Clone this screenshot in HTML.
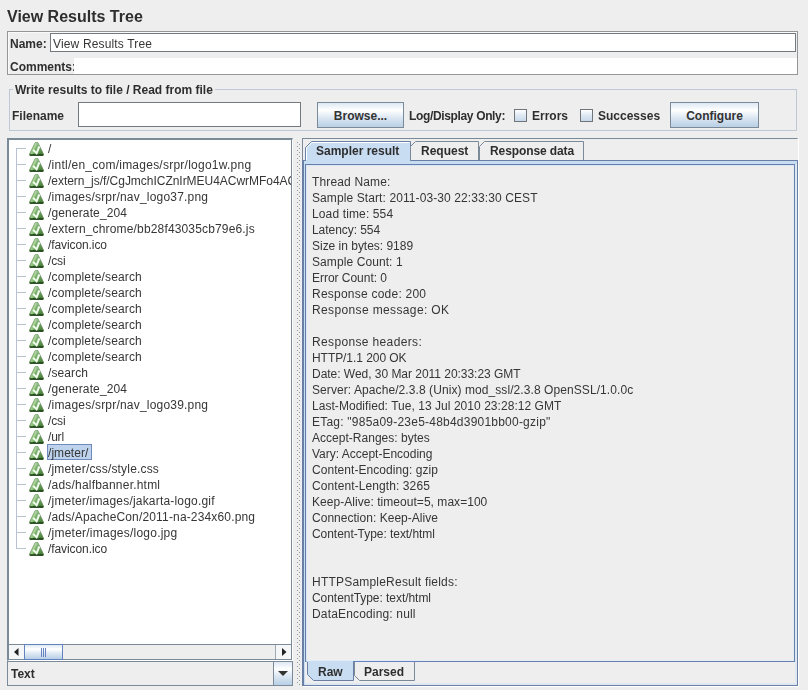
<!DOCTYPE html>
<html><head><meta charset="utf-8">
<style>
*{margin:0;padding:0;box-sizing:border-box}
html,body{width:808px;height:690px;overflow:hidden;background:#eeeeee;font-family:"Liberation Sans",sans-serif;color:#333;font-size:12px}
.a{position:absolute}
.t{position:absolute;white-space:pre;line-height:16px;height:16px;color:#363636;will-change:transform}
.t.b{color:#2e2e2e}
.b{font-weight:bold}
.btn{position:absolute;border:1px solid #7a8a99;background:linear-gradient(#dde8f3 0%,#ffffff 30%,#dde8f3 60%,#b8cfe5 100%);font-weight:bold;text-align:center;line-height:26px;color:#333}
.cb{position:absolute;width:13px;height:13px;border:1px solid #6f757a;background:linear-gradient(#ffffff,#dde8f3 50%,#c9d9ea)}
</style></head><body>
<svg width="0" height="0" style="position:absolute">
<defs>
<linearGradient id="gg" x1="0" y1="0" x2="1" y2="0.35">
<stop offset="0" stop-color="#9fd08a"/><stop offset="0.45" stop-color="#8cc476"/><stop offset="0.55" stop-color="#5f9c4e"/><stop offset="1" stop-color="#3f7a32"/>
</linearGradient>
<linearGradient id="gv" x1="0" y1="0" x2="0" y2="1">
<stop offset="0" stop-color="#ffffff" stop-opacity="0.35"/><stop offset="1" stop-color="#ffffff" stop-opacity="0"/>
</linearGradient>
<symbol id="ok" viewBox="0 0 15 14">
<path d="M6.2 0.6H8.8L14.5 12.2Q15 13.4 13.8 13.4H1.2Q0 13.4 0.5 12.2Z" fill="url(#gg)" stroke="#4d7d42" stroke-width="0.7"/>
<path d="M6.2 0.6H8.8L14.5 12.2Q15 13.4 13.8 13.4H1.2Q0 13.4 0.5 12.2Z" fill="url(#gv)"/>
<path d="M0.9 13H14.1" stroke="#1d3f18" stroke-width="1.5"/>
<path d="M4.1 7.9L7.6 11.3L10.3 4.3" fill="none" stroke="#f2fbee" stroke-width="2"/>
</symbol>
</defs></svg>
<!-- title -->
<div class="t b" style="left:7px;top:9px;font-size:16px;height:18px;line-height:16px">View Results Tree</div>

<!-- name panel -->
<div class="a" style="left:7px;top:31px;width:791px;height:44px;border:1px solid #949799;box-shadow:inset 1px 1px 0 #fafafa"></div>
<div class="t b" style="left:9.5px;top:36px">Name:</div>
<div class="a" style="left:50px;top:33px;width:746px;height:19px;border:1px solid #74797e;background:#fff"></div>
<div class="t" style="left:53px;top:36px;letter-spacing:0.15px">View Results Tree</div>
<div class="t b" style="left:9.5px;top:59px">Comments:</div>
<div class="a" style="left:74px;top:58px;width:723px;height:16px;background:#fff"></div>

<!-- group box -->
<div class="a" style="left:9px;top:89px;width:788px;height:42px;border:1px solid #bdc9d4"></div>
<div class="t b" style="left:13px;top:82px;padding:0 2px;background:#eeeeee">Write results to file / Read from file</div>
<div class="t b" style="left:12px;top:108px">Filename</div>
<div class="a" style="left:78px;top:102px;width:223px;height:25px;border:1px solid #74797e;background:#fff"></div>
<div class="btn" style="left:317px;top:102px;width:87px;height:26px">Browse...</div>
<div class="t b" style="left:409px;top:108px;letter-spacing:-0.35px">Log/Display Only:</div>
<div class="cb" style="left:514px;top:109px"></div>
<div class="t b" style="left:531.5px;top:108px">Errors</div>
<div class="cb" style="left:580px;top:109px"></div>
<div class="t b" style="left:598px;top:108px">Successes</div>
<div class="btn" style="left:670px;top:102px;width:89px;height:26px">Configure</div>

<!-- tree pane -->
<div class="a" style="left:7px;top:138px;width:286px;height:523px;border-top:2px solid #7a8a99;border-left:2px solid #7a8a99;border-right:1px solid #fff;border-bottom:1px solid #fff;"></div>
<div class="a" style="left:9px;top:140px;width:283px;height:505px;background:#fff;border-right:1px solid #7a8a99"></div>
<div id="tree" class="a" style="left:9px;top:140px;width:282px;height:504px;overflow:hidden">
<div class="a" style="left:7px;top:8px;width:1px;height:401px;background:#b9c3d0"></div>
<div class="a" style="left:8px;top:8px;width:9px;height:1px;background:#b9c3d0"></div>
<svg class="a ic" style="left:20px;top:2px" width="15" height="14"><use href="#ok"/></svg>
<div class="t" style="left:39px;top:1px;letter-spacing:-0.328px">/</div>
<div class="a" style="left:8px;top:24px;width:9px;height:1px;background:#b9c3d0"></div>
<svg class="a ic" style="left:20px;top:18px" width="15" height="14"><use href="#ok"/></svg>
<div class="t" style="left:39px;top:17px;letter-spacing:0.245px">/intl/en_com/images/srpr/logo1w.png</div>
<div class="a" style="left:8px;top:40px;width:9px;height:1px;background:#b9c3d0"></div>
<svg class="a ic" style="left:20px;top:34px" width="15" height="14"><use href="#ok"/></svg>
<div class="t" style="left:39px;top:33px;letter-spacing:-0.031px">/extern_js/f/CgJmchICZnIrMEU4ACwrMFo4ACw4ACw</div>
<div class="a" style="left:8px;top:56px;width:9px;height:1px;background:#b9c3d0"></div>
<svg class="a ic" style="left:20px;top:50px" width="15" height="14"><use href="#ok"/></svg>
<div class="t" style="left:39px;top:49px;letter-spacing:0.201px">/images/srpr/nav_logo37.png</div>
<div class="a" style="left:8px;top:72px;width:9px;height:1px;background:#b9c3d0"></div>
<svg class="a ic" style="left:20px;top:66px" width="15" height="14"><use href="#ok"/></svg>
<div class="t" style="left:39px;top:65px;letter-spacing:0.133px">/generate_204</div>
<div class="a" style="left:8px;top:88px;width:9px;height:1px;background:#b9c3d0"></div>
<svg class="a ic" style="left:20px;top:82px" width="15" height="14"><use href="#ok"/></svg>
<div class="t" style="left:39px;top:81px;letter-spacing:0.157px">/extern_chrome/bb28f43035cb79e6.js</div>
<div class="a" style="left:8px;top:104px;width:9px;height:1px;background:#b9c3d0"></div>
<svg class="a ic" style="left:20px;top:98px" width="15" height="14"><use href="#ok"/></svg>
<div class="t" style="left:39px;top:97px;letter-spacing:-0.095px">/favicon.ico</div>
<div class="a" style="left:8px;top:120px;width:9px;height:1px;background:#b9c3d0"></div>
<svg class="a ic" style="left:20px;top:114px" width="15" height="14"><use href="#ok"/></svg>
<div class="t" style="left:39px;top:113px;letter-spacing:-0.109px">/csi</div>
<div class="a" style="left:8px;top:136px;width:9px;height:1px;background:#b9c3d0"></div>
<svg class="a ic" style="left:20px;top:130px" width="15" height="14"><use href="#ok"/></svg>
<div class="t" style="left:39px;top:129px;letter-spacing:0.161px">/complete/search</div>
<div class="a" style="left:8px;top:152px;width:9px;height:1px;background:#b9c3d0"></div>
<svg class="a ic" style="left:20px;top:146px" width="15" height="14"><use href="#ok"/></svg>
<div class="t" style="left:39px;top:145px;letter-spacing:0.161px">/complete/search</div>
<div class="a" style="left:8px;top:168px;width:9px;height:1px;background:#b9c3d0"></div>
<svg class="a ic" style="left:20px;top:162px" width="15" height="14"><use href="#ok"/></svg>
<div class="t" style="left:39px;top:161px;letter-spacing:0.161px">/complete/search</div>
<div class="a" style="left:8px;top:184px;width:9px;height:1px;background:#b9c3d0"></div>
<svg class="a ic" style="left:20px;top:178px" width="15" height="14"><use href="#ok"/></svg>
<div class="t" style="left:39px;top:177px;letter-spacing:0.161px">/complete/search</div>
<div class="a" style="left:8px;top:200px;width:9px;height:1px;background:#b9c3d0"></div>
<svg class="a ic" style="left:20px;top:194px" width="15" height="14"><use href="#ok"/></svg>
<div class="t" style="left:39px;top:193px;letter-spacing:0.161px">/complete/search</div>
<div class="a" style="left:8px;top:216px;width:9px;height:1px;background:#b9c3d0"></div>
<svg class="a ic" style="left:20px;top:210px" width="15" height="14"><use href="#ok"/></svg>
<div class="t" style="left:39px;top:209px;letter-spacing:0.161px">/complete/search</div>
<div class="a" style="left:8px;top:232px;width:9px;height:1px;background:#b9c3d0"></div>
<svg class="a ic" style="left:20px;top:226px" width="15" height="14"><use href="#ok"/></svg>
<div class="t" style="left:39px;top:225px;letter-spacing:0.105px">/search</div>
<div class="a" style="left:8px;top:248px;width:9px;height:1px;background:#b9c3d0"></div>
<svg class="a ic" style="left:20px;top:242px" width="15" height="14"><use href="#ok"/></svg>
<div class="t" style="left:39px;top:241px;letter-spacing:0.133px">/generate_204</div>
<div class="a" style="left:8px;top:264px;width:9px;height:1px;background:#b9c3d0"></div>
<svg class="a ic" style="left:20px;top:258px" width="15" height="14"><use href="#ok"/></svg>
<div class="t" style="left:39px;top:257px;letter-spacing:0.201px">/images/srpr/nav_logo39.png</div>
<div class="a" style="left:8px;top:280px;width:9px;height:1px;background:#b9c3d0"></div>
<svg class="a ic" style="left:20px;top:274px" width="15" height="14"><use href="#ok"/></svg>
<div class="t" style="left:39px;top:273px;letter-spacing:-0.109px">/csi</div>
<div class="a" style="left:8px;top:296px;width:9px;height:1px;background:#b9c3d0"></div>
<svg class="a ic" style="left:20px;top:290px" width="15" height="14"><use href="#ok"/></svg>
<div class="t" style="left:39px;top:289px;letter-spacing:-0.200px">/url</div>
<div class="a" style="left:8px;top:312px;width:9px;height:1px;background:#b9c3d0"></div>
<svg class="a ic" style="left:20px;top:306px" width="15" height="14"><use href="#ok"/></svg>
<div class="a" style="left:38px;top:304px;width:45px;height:16px;background:#bdd2ec;border:1px solid #6f8bbd"></div>
<div class="t" style="left:39px;top:305px;letter-spacing:0.047px">/jmeter/</div>
<div class="a" style="left:8px;top:328px;width:9px;height:1px;background:#b9c3d0"></div>
<svg class="a ic" style="left:20px;top:322px" width="15" height="14"><use href="#ok"/></svg>
<div class="t" style="left:39px;top:321px;letter-spacing:0.174px">/jmeter/css/style.css</div>
<div class="a" style="left:8px;top:344px;width:9px;height:1px;background:#b9c3d0"></div>
<svg class="a ic" style="left:20px;top:338px" width="15" height="14"><use href="#ok"/></svg>
<div class="t" style="left:39px;top:337px;letter-spacing:0.207px">/ads/halfbanner.html</div>
<div class="a" style="left:8px;top:360px;width:9px;height:1px;background:#b9c3d0"></div>
<svg class="a ic" style="left:20px;top:354px" width="15" height="14"><use href="#ok"/></svg>
<div class="t" style="left:39px;top:353px;letter-spacing:0.194px">/jmeter/images/jakarta-logo.gif</div>
<div class="a" style="left:8px;top:376px;width:9px;height:1px;background:#b9c3d0"></div>
<svg class="a ic" style="left:20px;top:370px" width="15" height="14"><use href="#ok"/></svg>
<div class="t" style="left:39px;top:369px;letter-spacing:0.159px">/ads/ApacheCon/2011-na-234x60.png</div>
<div class="a" style="left:8px;top:392px;width:9px;height:1px;background:#b9c3d0"></div>
<svg class="a ic" style="left:20px;top:386px" width="15" height="14"><use href="#ok"/></svg>
<div class="t" style="left:39px;top:385px;letter-spacing:0.233px">/jmeter/images/logo.jpg</div>
<div class="a" style="left:8px;top:408px;width:9px;height:1px;background:#b9c3d0"></div>
<svg class="a ic" style="left:20px;top:402px" width="15" height="14"><use href="#ok"/></svg>
<div class="t" style="left:39px;top:401px;letter-spacing:-0.086px">/favicon.ico</div>
</div>
<!-- h scrollbar -->
<div class="a" style="left:9px;top:644px;width:283px;height:16px;background:#eeeeee;border-top:1px solid #7a8a99;border-bottom:1px solid #7a8a99;border-right:1px solid #7a8a99"></div>
<div class="a" style="left:9px;top:645px;width:15px;height:14px;background:#f4f6f8"></div>
<svg class="a" style="left:14px;top:648px" width="5" height="8"><path d="M4.5 0V8L0 4Z" fill="#222"/></svg>
<div class="a" style="left:24px;top:644px;width:39px;height:16px;border:1px solid #6382bf;background:linear-gradient(#dde8f3 0%,#ffffff 30%,#dde8f3 60%,#b8cfe5 100%)"></div>
<div class="a" style="left:41px;top:648px;width:1px;height:9px;background:#6382bf"></div>
<div class="a" style="left:43px;top:648px;width:1px;height:9px;background:#6382bf"></div>
<div class="a" style="left:45px;top:648px;width:1px;height:9px;background:#6382bf"></div>
<div class="a" style="left:275px;top:645px;width:16px;height:14px;background:#f4f6f8;border-left:1px solid #a0a8b0"></div>
<svg class="a" style="left:282px;top:648px" width="5" height="8"><path d="M0 0V8L4.5 4Z" fill="#222"/></svg>

<!-- combo -->
<div class="a" style="left:7px;top:661px;width:286px;height:25px;border:1px solid #7a8a99;background:#eeeeee"></div>
<div class="t b" style="left:11px;top:666px">Text</div>
<div class="a" style="left:273px;top:662px;width:19px;height:23px;border-left:1px solid #7a8a99;background:linear-gradient(#dde8f3 0%,#ffffff 30%,#dde8f3 60%,#b8cfe5 100%)"></div>
<svg class="a" style="left:278px;top:671px" width="10" height="5"><path d="M0 0H10L5 5Z" fill="#333"/></svg>

<!-- divider dots -->
<div class="a" style="left:297px;top:142px;width:1px;height:544px;background:repeating-linear-gradient(#9098a0 0 1px,transparent 1px 4px)"></div>
<div class="a" style="left:299px;top:144px;width:1px;height:542px;background:repeating-linear-gradient(#9098a0 0 1px,transparent 1px 4px)"></div>

<!-- right pane -->
<div class="a" style="left:303px;top:139px;width:496px;height:548px;background:#fff"></div>
<div class="a" style="left:302px;top:138px;width:496px;height:548px;border:1px solid #7a8a99;border-right-color:#eeeeee;background:#eeeeee"></div>
<!-- content border of outer tabs -->
<div class="a" style="left:302px;top:160px;width:496px;height:526px;border:1px solid #6a7fa6;border-left:2px solid #6a7fa6;background:#c8ddf2"></div>
<div class="a" style="left:305px;top:164px;width:490px;height:519px;background:#eeeeee"></div>
<div class="a" style="left:795px;top:164px;width:2px;height:521px;background:#dde8f3"></div>
<div class="a" style="left:305px;top:683px;width:492px;height:2px;background:#dde8f3"></div>
<!-- tabs top -->
<svg class="a" style="left:302px;top:138px" width="300" height="24">
<path d="M3.5 22.5V9.5L9.5 3.5H108.5V22.5" fill="#c8ddf2" stroke="#6a7fa6"/>
<path d="M4.5 22V9.9L9.9 4.5H107.5" fill="none" stroke="#fff"/>
<path d="M108.5 22.5V8.5L113.5 3.5H176.5V22.5" fill="#eeeeee" stroke="#7a8a99"/>
<path d="M177.5 22.5V8.5L182.5 3.5H281.5V22.5" fill="#eeeeee" stroke="#7a8a99"/>
<path d="M0 22.5H3.5M108.5 22.5H300" stroke="#6a7fa6"/>
<path d="M4 22.5H108" stroke="#c8ddf2"/>
</svg>
<div class="t b" style="left:316px;top:143px">Sampler result</div>
<div class="t b" style="left:421px;top:143px">Request</div>
<div class="t b" style="left:489.5px;top:143px;letter-spacing:-0.1px">Response data</div>

<!-- inner text area -->
<div class="a" style="left:305px;top:164px;width:490px;height:498px;border:1px solid #6580ad;background:#eeeeee;box-shadow:inset 1px 1px 0 #dae6f6,inset -1px -1px 0 #e4ecf6"></div>
<div class="t" style="left:312px;top:174px;letter-spacing:0.149px">Thread Name:</div>
<div class="t" style="left:312px;top:190px;letter-spacing:0.097px">Sample Start: 2011-03-30 22:33:30 CEST</div>
<div class="t" style="left:312px;top:206px;letter-spacing:0.132px">Load time: 554</div>
<div class="t" style="left:312px;top:222px;letter-spacing:-0.056px">Latency: 554</div>
<div class="t" style="left:312px;top:238px;letter-spacing:-0.016px">Size in bytes: 9189</div>
<div class="t" style="left:312px;top:254px;letter-spacing:0.087px">Sample Count: 1</div>
<div class="t" style="left:312px;top:270px;letter-spacing:-0.029px">Error Count: 0</div>
<div class="t" style="left:312px;top:286px;letter-spacing:0.231px">Response code: 200</div>
<div class="t" style="left:312px;top:302px;letter-spacing:0.367px">Response message: OK</div>
<div class="t" style="left:312px;top:334px;letter-spacing:0.355px">Response headers:</div>
<div class="t" style="left:312px;top:350px;letter-spacing:-0.059px">HTTP/1.1 200 OK</div>
<div class="t" style="left:312px;top:366px;letter-spacing:-0.031px">Date: Wed, 30 Mar 2011 20:33:23 GMT</div>
<div class="t" style="left:312px;top:382px;letter-spacing:0.079px">Server: Apache/2.3.8 (Unix) mod_ssl/2.3.8 OpenSSL/1.0.0c</div>
<div class="t" style="left:312px;top:398px;letter-spacing:0.043px">Last-Modified: Tue, 13 Jul 2010 23:28:12 GMT</div>
<div class="t" style="left:312px;top:414px;letter-spacing:0.223px">ETag: &quot;985a09-23e5-48b4d3901bb00-gzip&quot;</div>
<div class="t" style="left:312px;top:430px;letter-spacing:0.018px">Accept-Ranges: bytes</div>
<div class="t" style="left:312px;top:446px;letter-spacing:-0.006px">Vary: Accept-Encoding</div>
<div class="t" style="left:312px;top:462px;letter-spacing:0.055px">Content-Encoding: gzip</div>
<div class="t" style="left:312px;top:478px;letter-spacing:0.091px">Content-Length: 3265</div>
<div class="t" style="left:312px;top:494px;letter-spacing:0.041px">Keep-Alive: timeout=5, max=100</div>
<div class="t" style="left:312px;top:510px;letter-spacing:0.023px">Connection: Keep-Alive</div>
<div class="t" style="left:312px;top:526px;letter-spacing:-0.052px">Content-Type: text/html</div>
<div class="t" style="left:312px;top:574px;letter-spacing:0.210px">HTTPSampleResult fields:</div>
<div class="t" style="left:312px;top:590px;letter-spacing:-0.050px">ContentType: text/html</div>
<div class="t" style="left:312px;top:606px;letter-spacing:0.162px">DataEncoding: null</div>
<!-- bottom tabs -->
<svg class="a" style="left:302px;top:650px" width="120" height="36">
<path d="M5.5 11.5V24.5L11.5 30.5H51.5V11.5" fill="#c8ddf2" stroke="#6a7fa6"/>
<path d="M52.5 11.5V25.5L57.5 30.5H112.5V11.5" fill="#eeeeee" stroke="#7a8a99"/>
<path d="M3 11.5H5.5M51.5 11.5H120" stroke="#6382bf"/>
<path d="M4.5 11.5H51" stroke="#c8ddf2"/>
</svg>
<div class="t b" style="left:318px;top:664px">Raw</div>
<div class="t b" style="left:364px;top:664px">Parsed</div>

</body></html>
